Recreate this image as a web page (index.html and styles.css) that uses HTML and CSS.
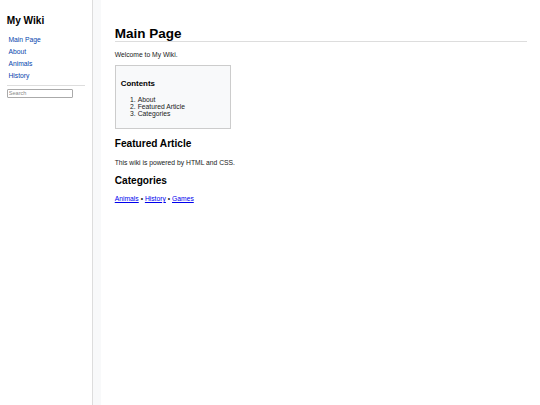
FILE: index.html
```html
<!DOCTYPE html>
<html lang="en">
<head>
<meta charset="utf-8">
<title>My Wiki</title>
<link rel="stylesheet" href="styles.css">
</head>
<body>
<nav class="sidebar">
  <h2 class="logo">My Wiki</h2>
  <ul class="nav">
    <li><a href="#">Main Page</a></li>
    <li><a href="#">About</a></li>
    <li><a href="#">Animals</a></li>
    <li><a href="#">History</a></li>
  </ul>
  <hr class="divider">
  <input class="search" type="text" placeholder="Search">
</nav>
<main class="content">
  <h1 class="title">Main Page</h1>
  <p>Welcome to My Wiki.</p>
  <div class="toc">
    <h3>Contents</h3>
    <ol>
      <li>About</li>
      <li>Featured Article</li>
      <li>Categories</li>
    </ol>
  </div>
  <h2>Featured Article</h2>
  <p>This wiki is powered by HTML and CSS.</p>
  <h2>Categories</h2>
  <p><a class="cat" href="#">Animals</a> • <a class="cat" href="#">History</a> • <a class="cat" href="#">Games</a></p>
</main>
</body>
</html>
```
FILE: styles.css
```css
html, body {
  margin: 0;
  height: 100%;
}
body {
  display: flex;
  font-family: "Liberation Sans", Arial, sans-serif;
  font-size: 6.75px;
  color: #202122;
  background: #f8f9fa;
}
.sidebar {
  box-sizing: border-box;
  width: 92.8px;
  flex: none;
  padding: 15.1px 6.75px;
  background: #fff;
  border-right: 1px solid #dddddd;
}
.logo {
  font-size: 10.125px;
  margin: 0 0 8.4px;
  color: #000;
}
.nav {
  list-style: none;
  margin: 0;
  padding: 0;
}
.nav a {
  display: block;
  line-height: 11.7px;
  padding-left: 1.7px;
  color: #0645ad;
  text-decoration: none;
}
.divider {
  height: 1px;
  border: 0;
  background: #dddddd;
  margin: 3.4px 0;
}
.search {
  display: block;
  box-sizing: border-box;
  width: 66.4px;
  height: 8.7px;
  margin: 0;
  padding: 0 1px;
  font-family: "Liberation Sans", Arial, sans-serif;
  font-size: 5.6px;
  border: 1px solid #aaaaaa;
  border-radius: 1px;
  background: #fff;
}
.search::placeholder {
  color: #8a8a8a;
}
.content {
  flex: 1;
  margin-left: 8.45px;
  padding: 16.5px 13.5px;
  background: #fff;
}
.title {
  font-size: 13.5px;
  margin: 9px 0;
  border-bottom: 1px solid #dddddd;
  color: #000;
}
p {
  margin: 6.75px 0;
}
.toc {
  width: 104px;
  padding: 5px;
  margin: 7.3px 0 6.75px;
  border: 1px solid #cccccc;
  background: #f8f9fa;
}
.toc h3 {
  font-size: 7.9px;
  margin: 7.9px 0;
  color: #000;
}
.toc ol {
  margin: 6.75px 0;
  padding-left: 16.9px;
}
h2 {
  font-size: 10.125px;
  margin: 9.15px 0;
  color: #000;
}
.cat {
  color: #0000ee;
}
```
